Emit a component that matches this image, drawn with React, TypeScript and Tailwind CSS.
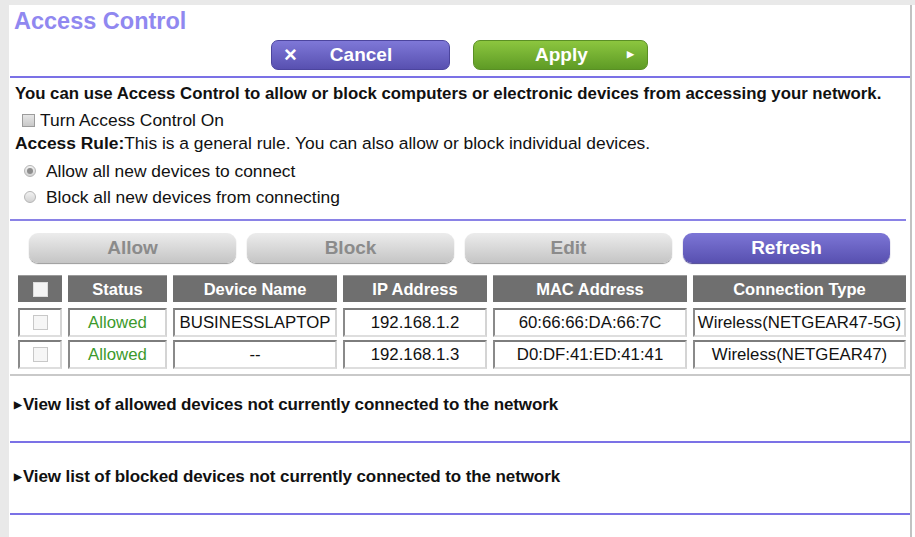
import React from "react";

const cols = "grid grid-cols-[44px_99px_164px_144px_194px_213px] gap-x-[6px]";

const rows = [
  { status: "Allowed", name: "BUSINESSLAPTOP", ip: "192.168.1.2", mac: "60:66:66:DA:66:7C", type: "Wireless(NETGEAR47-5G)" },
  { status: "Allowed", name: "--", ip: "192.168.1.3", mac: "D0:DF:41:ED:41:41", type: "Wireless(NETGEAR47)" },
];

function Cell({ children, className = "text-[#111]" }: { children?: React.ReactNode; className?: string }) {
  return (
    <div
      className={
        "h-[29px] flex items-center justify-center bg-white border-2 border-t-[#7d7d7d] border-l-[#8a8a8a] border-b-[#dedede] border-r-[#d4d4d4] text-[16.8px] whitespace-nowrap overflow-hidden " +
        className
      }
    >
      {children}
    </div>
  );
}

function Head({ children }: { children?: React.ReactNode }) {
  return (
    <div className="h-[27px] flex items-center justify-center bg-[#6f6f6f] border-t border-[#9a9a9a] text-white font-bold text-[16.5px]">
      {children}
    </div>
  );
}

function GrayBtn({ label }: { label: string }) {
  return (
    <button className="w-[207px] h-[30px] rounded-[9px] bg-linear-to-b from-[#ececec] to-[#c5c5c5] shadow-[0_1px_1px_#9a9a9a] text-[#8b8b8b] font-bold text-[19px]">
      {label}
    </button>
  );
}

function Radio({ checked }: { checked?: boolean }) {
  return (
    <span className="w-[12px] h-[12px] rounded-full border border-[#b5b5b5] bg-linear-to-b from-[#f2f2f2] to-[#d2d2d2] flex items-center justify-center">
      {checked ? <span className="w-[6px] h-[6px] rounded-full bg-[#8d8d8d]" /> : null}
    </span>
  );
}

export default function App() {
  return (
    <div className="w-[915px] h-[537px] bg-white border-t-[5px] border-l-[9px] border-[#e9e9e9] overflow-hidden font-['Liberation_Sans',Arial,sans-serif] text-[#111]">
      <div className="w-[903px] h-full bg-white border-r-2 border-[#c2c2c2] flex flex-col">
        <h1 className="pl-[5px] mt-[4px] h-[24px] leading-[24px] text-[23.5px] font-bold text-[#9088f0]">Access Control</h1>

        <div className="flex mt-[7px] ml-[262px] gap-[23px]">
          <button className="w-[179px] h-[30px] rounded-[7px] bg-linear-to-b from-[#7f78d8] to-[#5850b0] border border-[#4c459e] text-white font-bold text-[19px] flex items-center">
            <span className="ml-[12px] text-[22px] leading-none">×</span>
            <span className="ml-[33px]">Cancel</span>
          </button>
          <button className="w-[175px] h-[30px] rounded-[7px] bg-linear-to-b from-[#8cc63f] to-[#5e9b25] border border-[#5a8f25] text-white font-bold text-[19px] flex items-center">
            <span className="ml-[61px]">Apply</span>
            <span className="ml-[39px] text-[9px]">▶</span>
          </button>
        </div>

        <div className="mt-[6px] ml-[1px] h-[2px] bg-[#7b71e6]" />

        <p className="pl-[6px] mt-[7px] h-[18px] leading-[18px] text-[16.8px] font-bold whitespace-nowrap">
          You can use Access Control to allow or block computers or electronic devices from accessing your network.
        </p>
        <label className="pl-[13px] mt-[8px] h-[18px] flex items-center gap-[5px] text-[17.4px]">
          <span className="w-[13px] h-[13px] border border-[#9c9c9c] bg-linear-to-b from-[#e6e6e6] to-[#c9c9c9]" />
          Turn Access Control On
        </label>
        <p className="pl-[6px] mt-[5px] h-[18px] leading-[18px] text-[17.4px] whitespace-nowrap">
          <b>Access Rule:</b>This is a general rule. You can also allow or block individual devices.
        </p>
        <label className="pl-[15px] mt-[10px] h-[18px] flex items-center gap-[10px] text-[17.4px]">
          <Radio checked />
          Allow all new devices to connect
        </label>
        <label className="pl-[15px] mt-[8px] h-[18px] flex items-center gap-[10px] text-[17.4px]">
          <Radio />
          Block all new devices from connecting
        </label>

        <div className="mt-[13px] ml-[1px] mr-[4px] h-[2px] bg-[#8a82e6]" />

        <div className="flex mt-[12px] ml-[20px] gap-[11px]">
          <GrayBtn label="Allow" />
          <GrayBtn label="Block" />
          <GrayBtn label="Edit" />
          <button className="w-[207px] h-[30px] rounded-[9px] bg-linear-to-b from-[#7d76d6] to-[#5850b0] shadow-[0_1px_1px_#4a4490] text-white font-bold text-[19px]">
            Refresh
          </button>
        </div>

        <div className="mt-[12px] ml-[1px] pl-[8px] pb-[5px] border-b-2 border-[#c9c9c9]">
          <div className={cols}>
            <Head>
              <span className="w-[15px] h-[15px] bg-[#f4f4f4] border border-[#dcdcdc]" />
            </Head>
            <Head>Status</Head>
            <Head>Device Name</Head>
            <Head>IP Address</Head>
            <Head>MAC Address</Head>
            <Head>Connection Type</Head>
          </div>
          {rows.map((r, i) => (
            <div key={r.ip} className={cols + (i === 0 ? " mt-[6px]" : " mt-[3px]")}>
              <Cell>
                <span className="w-[15px] h-[15px] border border-[#c8c8c8] bg-[#f6f6f6]" />
              </Cell>
              <Cell className="text-[#3c9a2c]">{r.status}</Cell>
              <Cell>{r.name}</Cell>
              <Cell>{r.ip}</Cell>
              <Cell>{r.mac}</Cell>
              <Cell>{r.type}</Cell>
            </div>
          ))}
        </div>

        <div className="pl-[5px] mt-[20px] h-[18px] leading-[18px] text-[17px] font-bold tracking-[-0.1px] whitespace-nowrap">
          <span className="text-[10px] align-[2px] mr-[1px]">▶</span>View list of allowed devices not currently connected to the network
        </div>
        <div className="mt-[27px] ml-[1px] h-[2px] bg-[#7b71e6]" />

        <div className="pl-[5px] mt-[25px] h-[18px] leading-[18px] text-[17px] font-bold tracking-[-0.1px] whitespace-nowrap">
          <span className="text-[10px] align-[2px] mr-[1px]">▶</span>View list of blocked devices not currently connected to the network
        </div>
        <div className="mt-[27px] ml-[1px] h-[2px] bg-[#7b71e6]" />
      </div>
    </div>
  );
}
